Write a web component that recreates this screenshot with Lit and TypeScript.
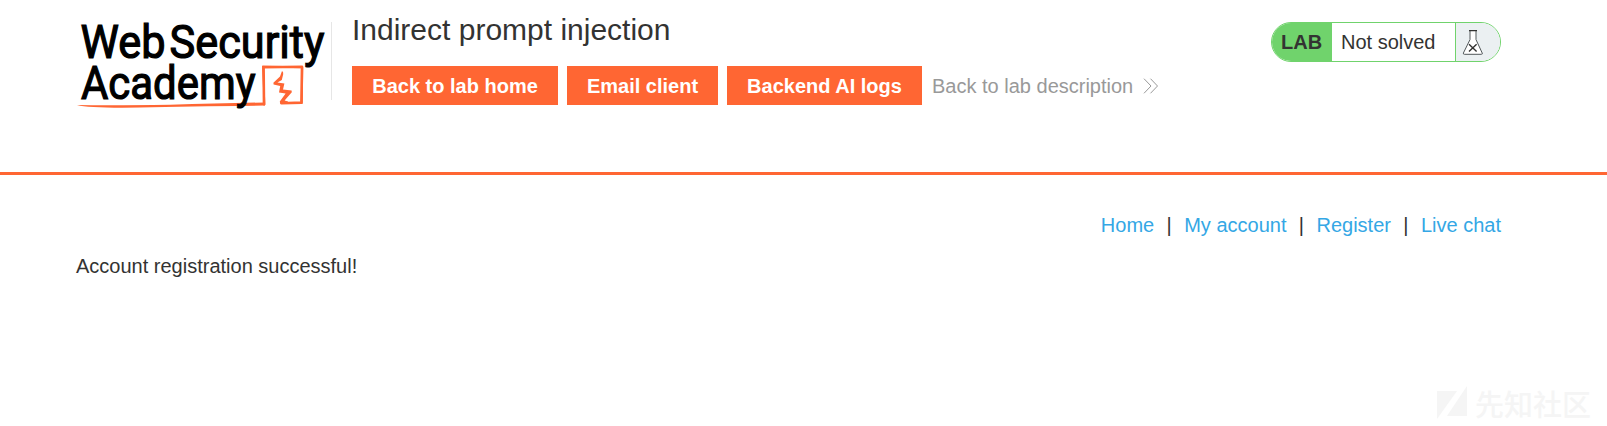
import { LitElement, html, css, svg } from "lit";
import { customElement } from "lit/decorators.js";

@customElement("academy-logo")
class AcademyLogo extends LitElement {
  static styles = css`
    :host { display: block; width: 255px; height: 100px; }
    svg { display: block; overflow: visible; }
    .word { font-family: Roboto, "Liberation Sans", sans-serif; font-weight: 400; font-size: 46px; fill: #000; stroke: #000; stroke-width: 1.2; }
    .mark { fill: none; stroke: #ff6633; stroke-linejoin: round; stroke-linecap: round; }
  `;
  render() {
    return html`<svg width="255" height="100" viewBox="76 10 255 100" role="img" aria-label="Web Security Academy">
      ${svg`
        <path class="mark" stroke-width="2.6" d="M264 104.2 L263.6 67.2 L302 66.8 L301.4 102.6 L281.5 103.2" />
        <path class="mark" stroke-width="1.6" d="M264.6 104.6 L262.8 66.4 L302.4 67.4 L302 103.2 L283 103" />
        <path fill="#ff6633" d="M77 105 Q110 105.6 170 104.8 Q220 103.4 265 102.4 L264.6 105.6 Q190 106.2 140 107.6 Q90 108.4 77 105Z" />
        <path fill="#ff6633" d="M282 71 Q283.6 72 283.2 74.2 L281.8 80 L277.4 82.6 L284.4 83.6 L283 89.4 L291.6 90.6 L291.8 92.2 L284.6 100.4 L288 101.4 L288 104 L280.2 103.8 L279.8 101.4 L285.6 93.4 L279 92.6 L280.2 86 L273.6 84.6 L273.4 82.8 L280 76.4Z" />
        <text class="word" x="80.5" y="58.2" textLength="85" lengthAdjust="spacingAndGlyphs">Web</text>
        <text class="word" x="169.5" y="58.2" textLength="155" lengthAdjust="spacingAndGlyphs">Security</text>
        <text class="word" x="81" y="98.6" textLength="174.5" lengthAdjust="spacingAndGlyphs">Academy</text>
      `}
    </svg>`;
  }
}

@customElement("lab-status")
class LabStatus extends LitElement {
  static styles = css`
    :host { display: flex; box-sizing: border-box; width: 230px; height: 40px; border: 1px solid #70d36c; border-radius: 20px; overflow: hidden; background: #fff; font-size: 20px; line-height: 38px; color: #333332; }
    .tag { width: 60px; box-sizing: border-box; padding-left: 9px; background: #70d36c; font-weight: bold; }
    .state { flex: 1; padding-left: 9px; border-right: 1px solid #70d36c; white-space: nowrap; }
    .flask { width: 44px; background: #ebf0f2; }
    svg { display: block; }
  `;
  render() {
    return html`<span class="tag">LAB</span><span class="state">Not solved</span>
      <span class="flask"><svg width="44" height="38" viewBox="1456 23 44 38" fill="none">
        <path d="M1470 31v8.6L1463.4 53Q1463 54.3 1464.4 54.3H1481.4Q1482.8 54.3 1482.2 53L1476 39.6V31" fill="#fff" stroke="#52585a" stroke-width="1" />
        <path d="M1469 30.7h8" stroke="#333332" stroke-width="1.3" />
        <path d="M1469 44.2l7.6 7.2M1476.6 44.2l-7.6 7.2" stroke="#333332" stroke-width="1.4" />
      </svg></span>`;
  }
}

@customElement("app-root")
class AppRoot extends LitElement {
  static styles = css`
    :host { display: block; position: relative; height: 426px; overflow: hidden; background: #fff; font-family: "Liberation Sans", Arial, sans-serif; font-size: 20px; line-height: 24px; color: #333332; }
    header { display: flex; box-sizing: border-box; height: 175px; padding: 10px 106px 0 76px; border-bottom: 3px solid #ff6633; }
    .intro { box-sizing: border-box; height: 78px; margin-top: 12px; padding-left: 20px; border-left: 1px solid #e6e6e6; }
    h2 { margin: -12px 0 0; font-size: 30px; font-weight: normal; line-height: 40px; white-space: nowrap; }
    .actions { display: flex; gap: 9px; margin-top: 16px; line-height: 41px; white-space: nowrap; }
    .button { width: 206px; height: 39px; background: #ff6633; color: #fff; font-weight: bold; text-align: center; }
    .email { width: 151px; }
    .logs { width: 195px; }
    .back { display: flex; align-items: center; gap: 10px; height: 41px; margin-left: 1px; color: #999; }
    .back svg { margin-top: -2px; }
    lab-status { margin: 12px 0 0 auto; }
    nav { display: flex; justify-content: flex-end; padding: 38px 106px 0 0; height: 24px; white-space: pre; }
    nav a { color: #34a7e5; }
    nav span { width: 30px; text-align: center; }
    p { margin: 17px 0 0 76px; }
    .watermark { position: absolute; left: 1437px; top: 385px; display: flex; gap: 7px; align-items: center; font-family: "Noto Sans CJK SC", sans-serif; font-size: 29px; font-weight: 500; line-height: 34px; color: #f5f5f5; white-space: nowrap; }
  `;
  render() {
    return html`
      <header>
        <academy-logo></academy-logo>
        <div class="intro">
          <h2>Indirect prompt injection</h2>
          <div class="actions">
            <a class="button">Back to lab home</a>
            <a class="button email">Email client</a>
            <a class="button logs">Backend AI logs</a>
            <a class="back">Back to lab description
              <svg width="16" height="16" viewBox="0 0 16 16" fill="none" stroke="#999" stroke-width="1"><path d="M1 .7 8 8 1 15.3M7.5 .7l7 7.3-7 7.3" /></svg>
            </a>
          </div>
        </div>
        <lab-status></lab-status>
      </header>
      <nav><a>Home</a><span>|</span><a>My account</a><span>|</span><a>Register</a><span>|</span><a>Live chat</a></nav>
      <p>Account registration successful!</p>
      <div class="watermark">
        <svg width="31" height="35" viewBox="0 0 31 35" fill="#f5f5f5"><path d="M0 6H20L0 34ZM30 1V31H10Z" /></svg>先知社区
      </div>`;
  }
}
